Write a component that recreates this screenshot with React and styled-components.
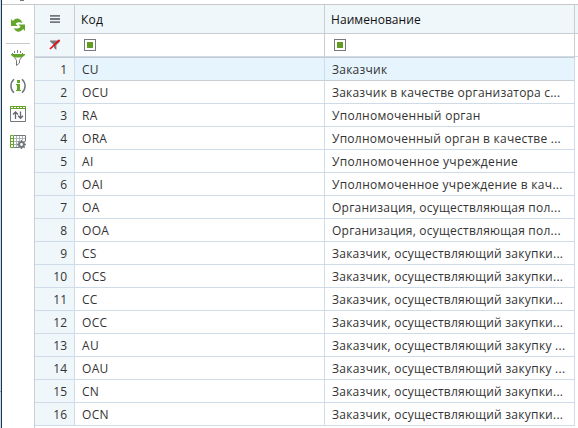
import React from "react";
import styled, { createGlobalStyle } from "styled-components";

const GlobalStyle = createGlobalStyle`
  * { box-sizing: border-box; }
  body { margin: 0; background: #fff; font-family: "Open Sans", "Noto Sans", sans-serif; overflow: hidden; }
`;

const Page = styled.div`
  display: flex;
  width: 578px;
  height: 428px;
  overflow: hidden;
  background: #fff;
`;

const WindowEdge = styled.div`
  flex: 0 0 2px;
  background: #d4d6d8;
  border-right: 1px solid #12375f;
  padding-top: 391px;
  &::after { content: ""; display: block; height: 1px; background: #9a9a9a; }
`;

const Content = styled.div`
  flex: 1;
  min-width: 0;
  display: flex;
  flex-direction: column;
`;

const TopStrip = styled.div`
  flex: 0 0 5px;
  padding-left: 18px;
  border-bottom: 1px solid #c8c8c8;
  &::before { content: ""; display: block; width: 4px; height: 1px; background: #73787d; }
`;

const Body = styled.div`
  flex: 1;
  display: flex;
  min-height: 0;
`;

const Toolbar = styled.div`
  flex: 0 0 33px;
  display: flex;
  flex-direction: column;
  align-items: flex-start;
  padding: 12px 0 0 4px;
  border-right: 1px solid #c9ced2;
`;

const ToolButton = styled.button`
  display: block;
  width: 24px;
  height: 16px;
  margin: 0 0 ${(p) => p.$gap}px;
  padding: 0 4px;
  border: 0;
  background: none;
  svg { display: block; }
`;

const Separator = styled.div`
  width: 24px;
  height: 1px;
  margin-bottom: 6px;
  background: #c8c8c8;
`;

const Grid = styled.div`
  flex: 1;
  min-width: 0;
`;

const Row = styled.div`
  display: grid;
  grid-template-columns: 40px 250px 250px 1fr;
  height: 23px;
`;

const HeaderRow = styled(Row)`
  height: 29px;
  background: #eff7fb;
`;

const FilterRow = styled(Row)`
  height: 23px;
`;

const HeaderLine = styled.div`
  height: 1px;
  background: #c6cbd0;
  margin-right: 3px;
`;

const Cell = styled.div`
  min-width: 0;
  padding-left: ${(p) => (p.$header ? 6 : 7)}px;
  border-right: 1px solid ${(p) => (p.$header ? "#c9ced2" : "#cfdbe6")};
  border-bottom: 1px solid ${(p) => (p.$strong ? "#c9ced2" : "#cfdbe6")};
  background: ${(p) => (p.$selected ? "#e6f4fe" : "transparent")};
  color: ${(p) => (p.$header ? "#111" : "#333")};
  font-size: 12px;
  line-height: ${(p) => (p.$header ? 29 : 23)}px;
  white-space: nowrap;
  overflow: hidden;
  letter-spacing: ${(p) => p.$track || 0}px;
`;

const NumberCell = styled(Cell)`
  background: #eff7fb;
  padding: 0 7px 0 0;
  text-align: right;
`;

const IconCell = styled(Cell)`
  background: #eff7fb;
  padding: ${(p) => p.$top}px 0 0 14px;
  svg { display: block; }
`;

const FilterCell = styled(Cell)`
  padding: 5px 0 0 9px;
`;

const HeaderRest = styled.div`
  border-bottom: 1px solid ${(p) => p.$color};
`;

const FilterBox = styled.div`
  width: 12px;
  height: 12px;
  padding: 2px;
  border: 1px solid #747a80;
  background: #fff;
  &::before { content: ""; display: block; width: 6px; height: 6px; background: #5f9e20; }
`;

const RefreshIcon = () => (
  <svg width="16" height="16" viewBox="0 0 16 16" fill="#64a52c">
    <path d="M1 2v7h6.8L5.6 6.8C7 5.2 9.5 4.8 12.3 6 11 1.2 6 -.2 3 4z" />
    <path d="M15 14V7.5H8.4l2.2 2.3C9.2 11.6 6.6 12 3.8 11 5.4 15.4 10.2 16.2 13 12z" />
  </svg>
);

const FunnelIcon = () => (
  <svg width="16" height="16" viewBox="0 0 16 16" fill="none">
    <path d="M4.5 1v2M7.5 0v3M10.5 1v2M2.5 3v1M12.5 3v1" stroke="#73787d" />
    <path d="M1 4h14v1l-3 2.5H4L1 5z" fill="#64a52c" />
    <path d="M4.5 7.5L6.5 10.3V15.5L9.5 13V10.3L11.5 7.5" stroke="#73787d" />
  </svg>
);

const InfoIcon = () => (
  <svg width="16" height="16" viewBox="0 0 16 16" fill="none">
    <path d="M4 1.2C-.1 5 -.1 11 4 14.8M12 1.2C16.1 5 16.1 11 12 14.8" stroke="#73787d" strokeWidth="1.5" />
    <path d="M7 2h3v3H7zM6 6h4v6h1v1H6v-1h1V7.2H6z" fill="#64a52c" />
  </svg>
);

const SortIcon = () => (
  <svg width="16" height="16" viewBox="0 0 16 16" fill="none">
    <path d="M.5 3v12.5h15V3" stroke="#73787d" />
    <path d="M0 0h16v3H0z" fill="#64a52c" />
    <path d="M1 1.5h14" stroke="#fff" strokeDasharray="2 1" />
    <path d="M5.5 13V6M3 8.5L5.5 6 8 8.5M10.5 5.5V12M8 9.8l2.5 2.5L13 9.8" stroke="#65696e" strokeWidth="1.3" />
  </svg>
);

const TableGearIcon = () => (
  <svg width="16" height="16" viewBox="0 0 16 16" fill="none">
    <path d="M4 4.5h12M4 7.5h6M4 10.5h4M6.5 2v12M9.5 2v6M12.5 2v4" stroke="#b0b3b6" />
    <path d="M4 1.5h11.5v6M4 13.5h5" stroke="#73787d" />
    <path d="M.5 1.5h3v12h-3zM.5 4.5h3M.5 7.5h3M.5 10.5h3" stroke="#64a52c" />
    <circle cx="11.5" cy="10.5" r="4.3" fill="#fff" />
    <path d="M11.5 6v9M7 10.5h9M8.3 7.3l6.4 6.4M14.7 7.3l-6.4 6.4" stroke="#73787d" strokeWidth="1.5" />
    <circle cx="11.5" cy="10.5" r="2.4" fill="#fff" stroke="#73787d" strokeWidth="2" />
  </svg>
);

const MenuIcon = () => (
  <svg width="12" height="9" viewBox="0 0 12 9" fill="#73787d">
    <path d="M1 0h10v1.7H1zM1 3h10v2H1zM1 6.3h10V8H1z" />
  </svg>
);

const ClearFilterIcon = () => (
  <svg width="12" height="12" viewBox="0 0 12 12" fill="none">
    <path d="M1 1.5h10v1L7.4 6v5L5 9V6L1 2.5z" fill="#777b80" />
    <path d="M1 10L10.5 .8" stroke="#f00b10" strokeWidth="1.7" />
  </svg>
);

const rows = [
  ["CU", "Заказчик", 0.25],
  ["OCU", "Заказчик в качестве организатора с...", 0.2],
  ["RA", "Уполномоченный орган", 0.28],
  ["ORA", "Уполномоченный орган в качестве ...", 0.24],
  ["AI", "Уполномоченное учреждение", 0.33],
  ["OAI", "Уполномоченное учреждение в кач...", 0.3],
  ["OA", "Организация, осуществляющая пол...", 0.24],
  ["OOA", "Организация, осуществляющая пол...", 0.24],
  ["CS", "Заказчик, осуществляющий закупки...", 0.25],
  ["OCS", "Заказчик, осуществляющий закупки...", 0.25],
  ["CC", "Заказчик, осуществляющий закупки...", 0.25],
  ["OCC", "Заказчик, осуществляющий закупки...", 0.25],
  ["AU", "Заказчик, осуществляющий закупку ...", 0.26],
  ["OAU", "Заказчик, осуществляющий закупку ...", 0.26],
  ["CN", "Заказчик, осуществляющий закупки...", 0.25],
  ["OCN", "Заказчик, осуществляющий закупки...", 0.25],
];

export default function App() {
  return (
    <>
      <GlobalStyle />
      <Page>
        <WindowEdge />
        <Content>
          <TopStrip />
          <Body>
            <Toolbar>
              <ToolButton $gap={10}><RefreshIcon /></ToolButton>
              <Separator />
              <ToolButton $gap={12}><FunnelIcon /></ToolButton>
              <ToolButton $gap={12}><InfoIcon /></ToolButton>
              <ToolButton $gap={12}><SortIcon /></ToolButton>
              <ToolButton $gap={0}><TableGearIcon /></ToolButton>
            </Toolbar>
            <Grid>
              <HeaderRow>
                <IconCell $header $strong $top={10}><MenuIcon /></IconCell>
                <Cell $header $strong $track={0.2}>Код</Cell>
                <Cell $header $strong $track={0.06}>Наименование</Cell>
                <HeaderRest $color="#c9ced2" />
              </HeaderRow>
              <FilterRow>
                <IconCell $header $top={5}><ClearFilterIcon /></IconCell>
                <FilterCell $header><FilterBox /></FilterCell>
                <FilterCell $header><FilterBox /></FilterCell>
                <HeaderRest $color="#cfdbe6" />
              </FilterRow>
              <HeaderLine />
              {rows.map(([code, name, track], i) => (
                <Row key={code}>
                  <NumberCell>{i + 1}</NumberCell>
                  <Cell $selected={i === 0} $strong={i === 0} $track={0.3}>{code}</Cell>
                  <Cell $selected={i === 0} $strong={i === 0} $track={track}>{name}</Cell>
                </Row>
              ))}
            </Grid>
          </Body>
        </Content>
      </Page>
    </>
  );
}
